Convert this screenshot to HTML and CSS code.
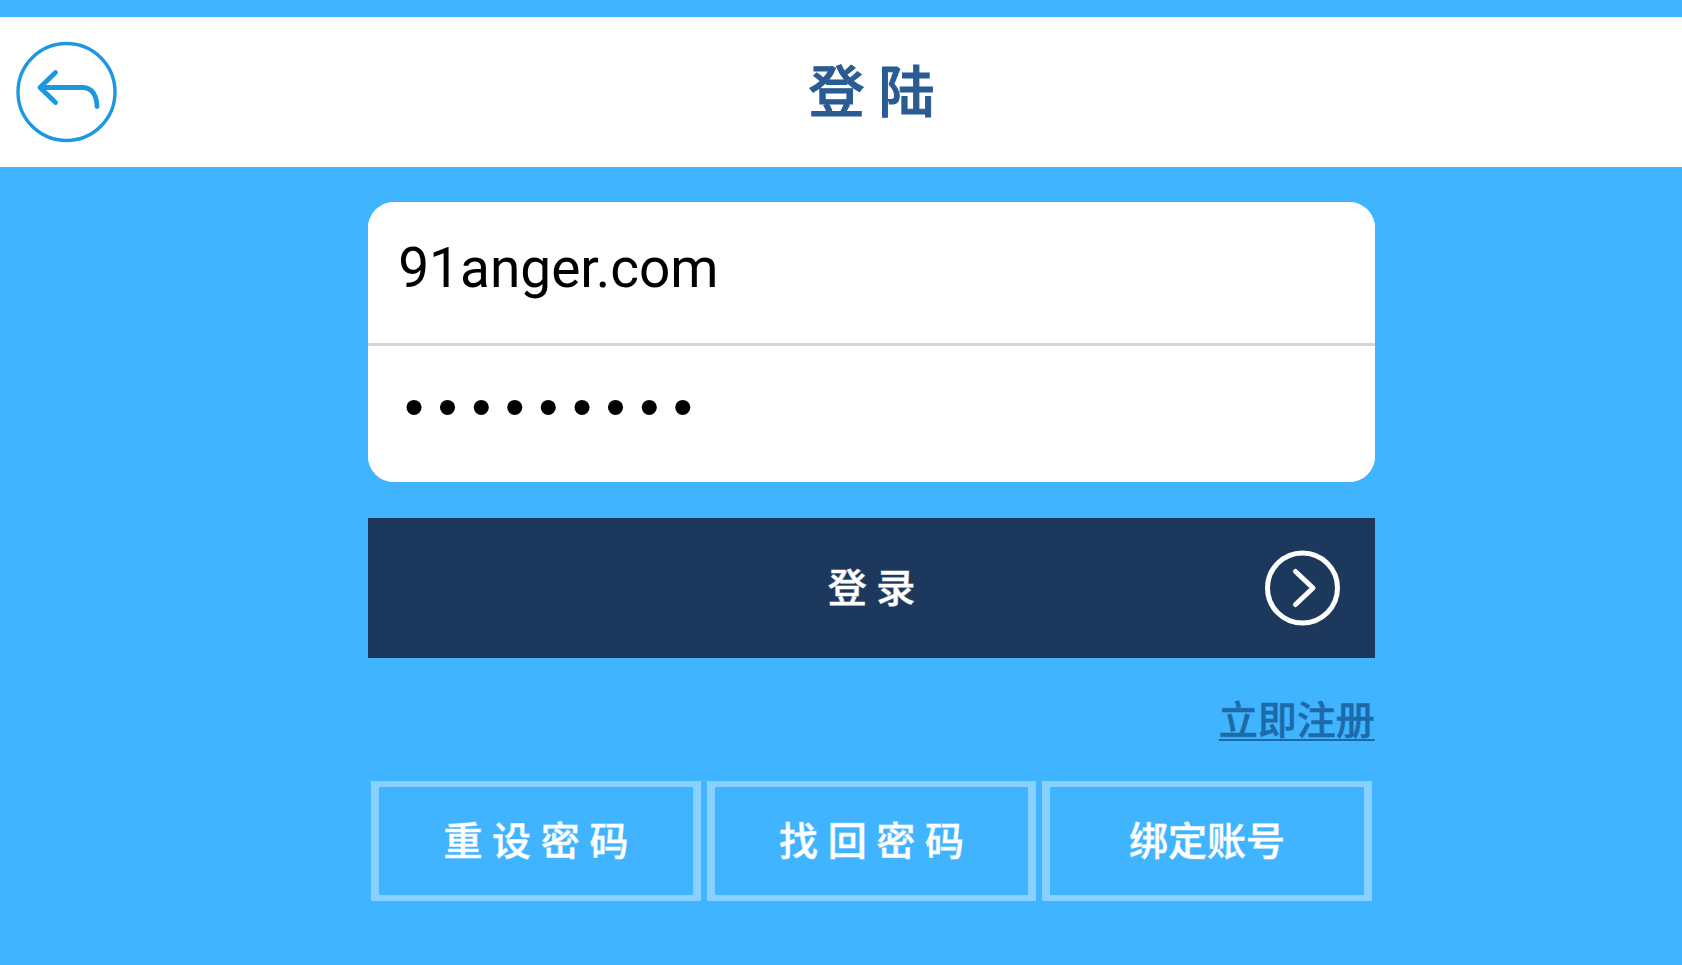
FILE: index.html
```html
<!DOCTYPE html>
<html lang="zh-CN">
<head>
<meta charset="utf-8">
<meta name="viewport" content="width=device-width, initial-scale=1">
<title>登陆</title>
<link rel="stylesheet" href="styles.css">
</head>
<body>
<header class="topbar">
  <button class="back" type="button" aria-label="返回">
    <svg viewBox="0 0 100 100" fill="none" stroke="#1f97e0" stroke-linecap="round" stroke-linejoin="round">
      <circle cx="50.500" cy="50" r="48.500" stroke-width="3.400"/>
      <path d="M39.500 30.500 24 45.500 39.500 60.500" stroke-width="4.800"/>
      <path d="M24.500 45.500H67C76 45.500 81 54 81 64.500" stroke-width="4.800"/>
    </svg>
  </button>
  <h1 class="title">登 陆</h1>
</header>
<main class="content">
  <form class="login">
    <div class="fields">
      <input class="field" type="text" aria-label="账号" value="91anger.com">
      <input class="field field-password" type="password" aria-label="密码" value="123456789">
    </div>
    <button class="submit" type="button">登 录
      <svg class="submit-icon" viewBox="0 0 76 76" fill="none" stroke="#fff" stroke-linecap="round" stroke-linejoin="round" aria-hidden="true">
        <circle cx="37.500" cy="38" r="35" stroke-width="5"/>
        <path d="M30.500 21.500 48 38 30.500 54.500" stroke-width="5"/>
      </svg>
    </button>
    <a class="register" href="#">立即注册</a>
    <div class="actions">
      <button class="action" type="button">重 设 密 码</button>
      <button class="action" type="button">找 回 密 码</button>
      <button class="action" type="button">绑定账号</button>
    </div>
  </form>
</main>
</body>
</html>
```
FILE: styles.css
```css
* { box-sizing: border-box; }
body {
  margin: 0;
  padding-top: 17px;
  background: #40b4ff;
  font-family: Roboto, "Noto Sans CJK SC", sans-serif;
}
button, input { font-family: inherit; }
.topbar {
  position: relative;
  display: flex;
  align-items: center;
  justify-content: center;
  height: 150px;
  padding-left: 61px;
  background: #fff;
}
.back {
  position: absolute;
  left: 16px;
  width: 100px;
  height: 100px;
  padding: 0;
  border: 0;
  background: none;
}
.back svg { display: block; overflow: visible; }
.title {
  margin: 0;
  padding-top: 2px;
  color: #2a5b93;
  font-size: 56px;
  font-weight: 500;
  line-height: 80px;
  -webkit-text-stroke: 1px #2a5b93;
}
.submit, .action { -webkit-text-stroke: 1px rgba(255, 255, 255, 0.5); }
.content { padding: 35px 0 0 61px; }
.login {
  display: flex;
  flex-direction: column;
  width: 62.1%;
  margin: 0 auto;
}
.fields {
  overflow: hidden;
  border-radius: 26px;
  background: #fff;
}
.field {
  display: block;
  width: 100%;
  height: 141px;
  padding: 0 30px 10px;
  border: 0;
  outline: 0;
  background: #fff;
  color: #000;
  font-size: 55px;
}
.field-password {
  height: 139px;
  padding: 0 29px 7px;
  border-top: 3px solid #d4d4d4;
  font-family: "Liberation Mono", monospace;
  font-size: 56px;
}
.submit {
  position: relative;
  height: 140px;
  margin-top: 36px;
  padding: 0 0 6px;
  border: 0;
  background: #1c395d;
  color: #fff;
  font-size: 39px;
  font-weight: 500;
}
.submit-icon {
  position: absolute;
  top: 32px;
  right: 34px;
  width: 76px;
  height: 76px;
}
.register {
  align-self: flex-end;
  margin-top: 33px;
  color: #1c6aa8;
  font-size: 39px;
  font-weight: 500;
  line-height: 60px;
  text-decoration: underline 2px #1c6aa8;
  text-underline-offset: 5px;
  text-decoration-skip-ink: none;
  -webkit-text-stroke: 1px rgba(28, 106, 168, 0.5);
}
.actions {
  display: grid;
  grid-template-columns: repeat(3, 1fr);
  gap: 6px;
  margin-top: 30px;
  padding: 0 3px;
}
.action {
  height: 120px;
  padding: 0 0 6px;
  border: solid #87d0ff;
  border-width: 6px 8px;
  background: none;
  color: #fff;
  font-size: 39px;
  font-weight: 500;
}
```
